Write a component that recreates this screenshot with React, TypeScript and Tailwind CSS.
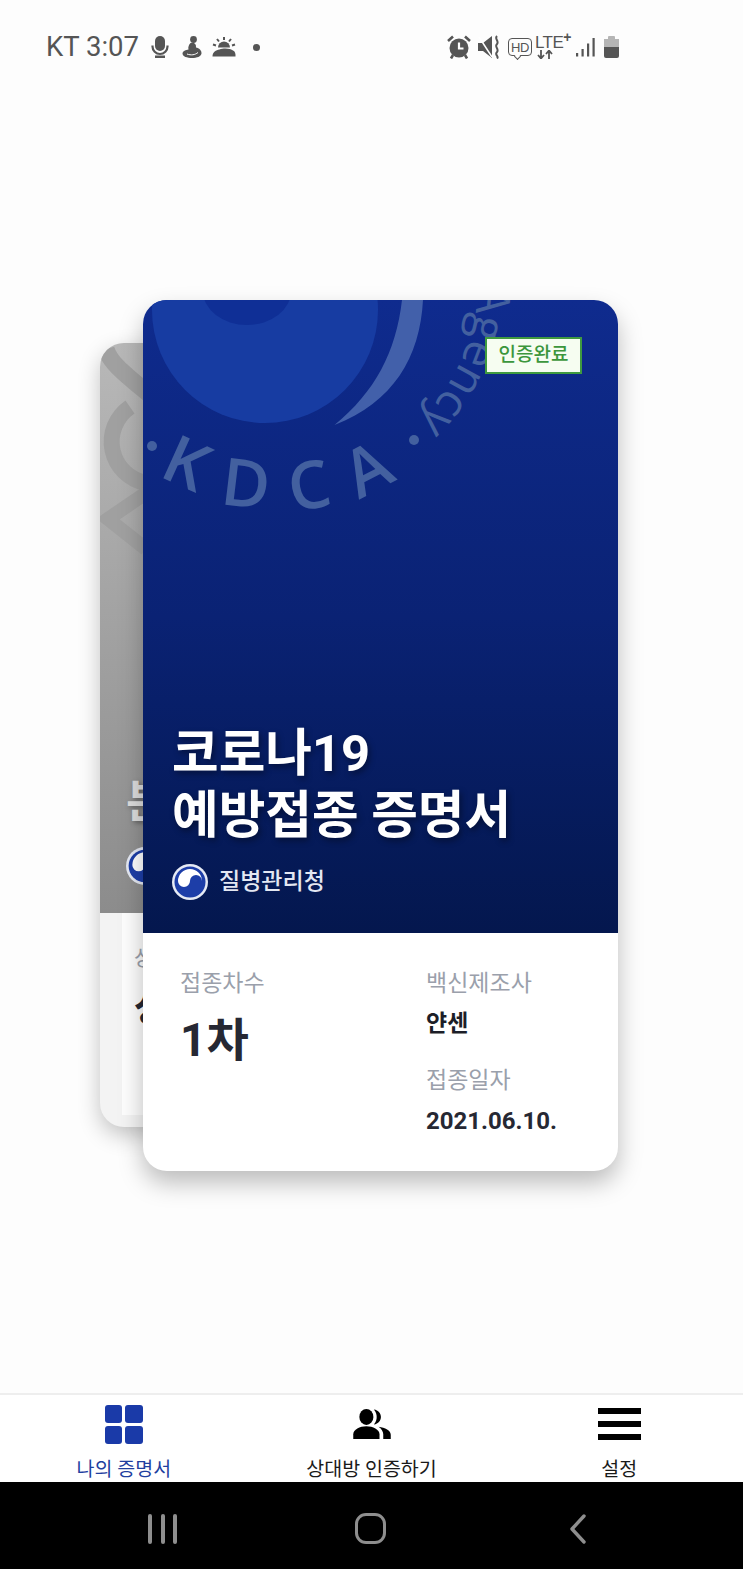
import React from "react";

const sans = "font-['Roboto','Noto_Sans_CJK_KR',sans-serif]";

const Taegeuk = ({ className = "" }: { className?: string }) => (
  <svg viewBox="0 0 36 36" className={className}>
    <circle cx="18" cy="18" r="18" fill="#e6eaf4" />
    <circle cx="18" cy="18" r="15.5" fill="#1d3ea8" />
    <path d="M6 17A12 12 0 0 1 30 17A6 6 0 0 0 18 17A6 6 0 0 1 6 17Z" fill="#ffffff" />
  </svg>
);

const StatusBar = () => (
  <div className="flex h-[94px] shrink-0 items-center justify-between pl-[46px] pr-[124px] text-[#555555]">
    <div className="flex items-center">
      <span className={`${sans} text-[27.5px] leading-none`}>KT 3:07</span>
      <svg viewBox="0 0 18 22" className="ml-[12px] h-[22px] w-[18px]" fill="#555555">
        <rect x="4" y="0" width="10" height="15" rx="5" />
        <path d="M1.5 9.5V10.5A7.5 7.5 0 0 0 16.5 10.5V9.5" fill="none" stroke="#555555" strokeWidth="2.2" />
        <rect x="4" y="19.5" width="10" height="2.5" />
      </svg>
      <svg viewBox="0 0 20 22" className="ml-[13px] h-[22px] w-[20px]" fill="#555555">
        <circle cx="11.5" cy="3.5" r="3.4" />
        <path d="M8.5 7C12 6 14.5 8 14 11.5C17 12 19.8 14.5 19.5 17.5C19 20.5 15 22 10 22C5 22 0.5 20.5 0.5 17.5C0.5 15 4 14 6.5 13.5C5.8 11 7 8.5 8.5 7Z" />
        <path d="M5 18C9 19.5 13 19 16 16.5" fill="none" stroke="#ffffff" strokeWidth="1" />
      </svg>
      <svg viewBox="0 0 24 20" className="ml-[10px] h-[20px] w-[24px]" fill="#555555">
        <path d="M6 10.5A6 6 0 0 1 18 10.5Z" />
        <path d="M12 0V3M5 2L7 4.5M19 2L17 4.5M1 7.5L4 8.5M23 7.5L20 8.5" stroke="#555555" strokeWidth="2" />
        <path d="M0.5 19.5C0.5 15 4 13 7.5 12.5C12 10.5 19 11.5 21 13.5C23 14 23.8 17 23.5 19.5Z" />
      </svg>
      <div className="ml-[17px] h-[7px] w-[7px] rounded-full bg-[#555555]" />
    </div>
    <div className="flex items-center">
      <svg viewBox="0 0 24 24" className="h-[24px] w-[24px]" fill="#555555">
        <circle cx="12" cy="13" r="9.5" />
        <path d="M12 7.5V13.5H16.5" fill="none" stroke="#ffffff" strokeWidth="2.2" />
        <path d="M1 6L6 1.5M23 6L18 1.5M6 20L4 23.5M18 20L20 23.5" stroke="#555555" strokeWidth="2.6" />
      </svg>
      <svg viewBox="0 0 23 24" className="ml-[7px] h-[24px] w-[23px]" fill="#555555">
        <path d="M0 8H5L14 1V23L5 16H0Z" />
        <path d="M1 2L14 22" stroke="#ffffff" strokeWidth="1.5" />
        <path d="M19 1C16 4 21.5 6 19 9C16 12 21.5 14 19 17C16 20 21.5 21 19 23.5" fill="none" stroke="#555555" strokeWidth="2" />
      </svg>
      <div className="relative ml-[7px] flex h-[18px] w-[24px] items-center justify-center rounded-[4px] border border-[#555555]">
        <span className="font-['Liberation_Sans',sans-serif] text-[13px] leading-none tracking-[-0.5px]">HD</span>
        <div className="absolute bottom-[-4px] left-[6px] h-[5px] w-[5px] rotate-45 border-b border-r border-[#555555] bg-[#fdfdfd]" />
      </div>
      <div className="ml-[3px] flex w-[36px] flex-col font-['Liberation_Sans',sans-serif] leading-none">
        <span className="text-[17px] font-medium leading-[15px] tracking-[-0.6px]">LTE<sup className="top-[-6px] text-[14px] font-bold leading-none">+</sup></span>
        <svg viewBox="0 0 16 9" className="ml-[2px] h-[9px] w-[16px]" fill="none" stroke="#555555" strokeWidth="1.8">
          <path d="M4 0V8M1 5L4 8.5L7 5M12 9V1M9 4L12 0.5L15 4" />
        </svg>
      </div>
      <svg viewBox="0 0 19 20" className="ml-[5px] h-[20px] w-[19px]" fill="#555555">
        <rect x="0" y="16" width="2.2" height="3.5" />
        <rect x="5.5" y="12" width="2.2" height="7.5" />
        <rect x="11" y="6.5" width="2.2" height="13" />
        <rect x="16.5" y="1" width="2.2" height="18.5" />
      </svg>
      <div className="ml-[9px] flex h-[22px] w-[15px] flex-col">
        <div className="mx-auto h-[3px] w-[7px] rounded-t-[1px] bg-[#b5b5b5]" />
        <div className="h-[8px] bg-[#b5b5b5]" />
        <div className="flex-1 rounded-b-[2px] bg-[#555555]" />
      </div>
    </div>
  </div>
);

const BackCard = () => (
  <div className="absolute left-[100px] top-[249px] flex h-[784px] w-[380px] flex-col overflow-hidden rounded-[24px] bg-[#f3f3f3] shadow-[0_8px_22px_rgba(0,0,0,0.24)]">
    <div className="relative flex h-[570px] shrink-0 flex-col justify-end bg-gradient-to-b from-[#b8b8b8] to-[#8c8c8c] pb-[28px] pl-[26px]">
      <svg viewBox="0 0 60 240" className="absolute left-0 top-0 h-[240px] w-[60px]" fill="none" stroke="#a0a0a0">
        <path d="M6 6C10 20 26 32 50 52" strokeWidth="17" />
        <path d="M30 64A42 42 0 0 0 46 140" strokeWidth="16" />
        <path d="M46 150L8 176L46 206" strokeWidth="14" />
      </svg>
      <div className={`${sans} relative text-[45px] font-bold leading-[56px] text-[#dcdcdc] [text-shadow:2px_2px_5px_rgba(0,0,0,0.35)]`}>분</div>
      <div className="relative mt-[16px] h-[38px] w-[38px]">
        <Taegeuk className="h-[38px] w-[38px]" />
      </div>
    </div>
    <div className="mb-[12px] ml-[22px] flex-1 bg-[#fdfdfd] pl-[12px] pt-[30px]">
      <div className={`${sans} text-[21px] leading-[30px] text-[#9aa0ab]`}>상</div>
      <div className={`${sans} mt-[10px] text-[40px] font-bold leading-[50px] text-[#262833]`}>상</div>
    </div>
  </div>
);

const FrontCard = () => (
  <div className="relative ml-[143px] flex h-[871px] w-[475px] flex-col overflow-hidden rounded-[24px] bg-white shadow-[0_12px_24px_rgba(0,0,0,0.26)]">
    <div className="relative flex h-[633px] shrink-0 flex-col justify-end bg-gradient-to-b from-[#0f2b8e] via-[#0a2274] via-50% to-[#04174e] pb-[33px] pl-[29px]">
      <svg viewBox="0 0 475 260" className="absolute left-0 top-0 h-[260px] w-[475px]">
        <circle cx="122" cy="10" r="113" fill="#173ca2" />
        <ellipse cx="104" cy="-9" rx="44" ry="34" fill="#0f2f96" />
        <path d="M259 0H280C277 58 250 102 191.5 125C232 92 253 52 259 0Z" fill="#4260aa" />
        <path id="kdcaArc" d="M-90 -20A230 230 0 0 0 370 -20" fill="none" />
        <path id="agencyArc" d="M335 -20A195 195 0 0 1 140 175" fill="none" />
        <text className="font-['Open_Sans',sans-serif]" fontSize="66" fontWeight="600" fill="#43609f" letterSpacing="25" textAnchor="middle">
          <textPath href="#kdcaArc" startOffset="368">KDCA</textPath>
        </text>
        <text className="font-['Open_Sans',sans-serif]" fontSize="46" fontWeight="500" fill="#43609f">
          <textPath href="#agencyArc" startOffset="4">Agency</textPath>
        </text>
        <circle cx="9" cy="146" r="5" fill="#43609f" />
        <circle cx="271" cy="140" r="5" fill="#43609f" />
      </svg>
      <div className={`${sans} relative text-[50.7px] font-bold leading-[62px] text-white [text-shadow:2px_3px_6px_rgba(0,0,0,0.4)]`}>
        코로나19
        <br />
        예방접종 증명서
      </div>
      <div className="relative mt-[17px] flex items-center">
        <Taegeuk className="h-[36px] w-[36px]" />
        <span className={`${sans} ml-[11px] text-[23px] font-medium leading-[36px] text-[#e3e7f2]`}>질병관리청</span>
      </div>
    </div>
    <div className="flex flex-1 pl-[37px] pt-[34px]">
      <div className="w-[246px]">
        <div className={`${sans} text-[23px] leading-[34px] text-[#9aa0ab]`}>접종차수</div>
        <div className={`${sans} mt-[8px] text-[46px] font-bold leading-[62px] text-[#262833]`}>1차</div>
      </div>
      <div>
        <div className={`${sans} text-[23px] leading-[34px] text-[#9aa0ab]`}>백신제조사</div>
        <div className={`${sans} mt-[6px] text-[23px] font-bold leading-[34px] text-[#1c1e28]`}>얀센</div>
        <div className={`${sans} mt-[23px] text-[23px] leading-[34px] text-[#9aa0ab]`}>접종일자</div>
        <div className={`${sans} mt-[6px] text-[24px] font-bold leading-[34px] text-[#262833]`}>2021.06.10.</div>
      </div>
    </div>
    <div className={`${sans} absolute left-[342px] top-[37px] flex h-[37px] w-[97px] items-center justify-center border-2 border-[#3f9a3f] bg-[#f6fdf1] text-[19px] font-medium text-[#3c963c]`}>
      인증완료
    </div>
  </div>
);

const NavItem = ({ label, active, icon }: { label: string; active?: boolean; icon: React.ReactNode }) => (
  <div className="flex w-[248px] flex-col items-center">
    <div className="flex h-[62px] items-center justify-center">{icon}</div>
    <span className={`${sans} mt-[5px] text-[19.5px] leading-[24px] ${active ? "text-[#1f3f9f]" : "text-[#1a1a1a]"}`}>{label}</span>
  </div>
);

export default function App() {
  return (
    <div className="flex h-[1569px] w-[743px] flex-col overflow-hidden bg-[#fdfdfd]">
      <StatusBar />
      <div className="relative flex-1 pt-[206px]">
        <BackCard />
        <FrontCard />
      </div>
      <div className="flex h-[89px] shrink-0 justify-between overflow-hidden border-t-2 border-[#eeeeee] bg-white">
        <NavItem
          active
          label="나의 증명서"
          icon={
            <div className="grid w-[38px] grid-cols-2 gap-[3px]">
              <div className="h-[18px] rounded-[3px] bg-[#1a3aa8]" />
              <div className="h-[18px] rounded-[3px] bg-[#1a3aa8]" />
              <div className="h-[18px] rounded-[3px] bg-[#1a3aa8]" />
              <div className="h-[18px] rounded-[3px] bg-[#1a3aa8]" />
            </div>
          }
        />
        <NavItem
          label="상대방 인증하기"
          icon={
            <svg viewBox="0 0 40 32" className="h-[30px] w-[40px]" fill="#000000">
              <ellipse cx="14" cy="8.5" rx="7.5" ry="8.5" />
              <path d="M0 32V27C0 22 7 18.5 14 18.5C21 18.5 28 22 28 27V32Z" />
              <path d="M22 0.5C27 1 29.5 5 29.5 8.5C29.5 12 27 16 22 16.5C24.5 13.5 25 11 25 8.5C25 6 24.5 3.5 22 0.5Z" />
              <path d="M27 19C34 20 40 23 40 27.5V32H32V27C32 24 30 21 27 19Z" />
            </svg>
          }
        />
        <NavItem
          label="설정"
          icon={
            <div className="flex w-[43px] flex-col gap-[7px]">
              <div className="h-[6px] bg-black" />
              <div className="h-[6px] bg-black" />
              <div className="h-[6px] bg-black" />
            </div>
          }
        />
      </div>
      <div className="flex h-[87px] shrink-0 items-center bg-black pb-[1px] pl-[148px] pt-[7px]">
        <div className="flex w-[29px] justify-between">
          <div className="h-[30px] w-[4px] rounded-full bg-[#8e8e8e]" />
          <div className="h-[30px] w-[4px] rounded-full bg-[#8e8e8e]" />
          <div className="h-[30px] w-[4px] rounded-full bg-[#8e8e8e]" />
        </div>
        <div className="ml-[178px] h-[31px] w-[31px] rounded-[11px] border-[3.5px] border-[#8e8e8e]" />
        <svg viewBox="0 0 18 30" className="ml-[183px] h-[30px] w-[18px]" fill="none" stroke="#8e8e8e" strokeWidth="3.4" strokeLinecap="round" strokeLinejoin="round">
          <path d="M15 2L3 15L15 28" />
        </svg>
      </div>
    </div>
  );
}
